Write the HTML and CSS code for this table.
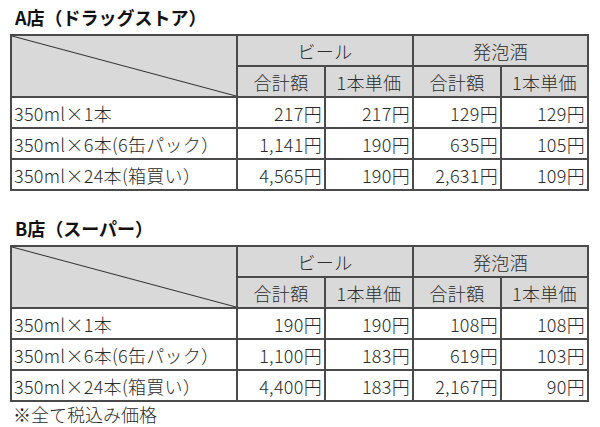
FILE: index.html
```html
<!DOCTYPE html>
<html lang="ja">
<head>
<meta charset="utf-8">
<link rel="stylesheet" href="styles.css">
</head>
<body>
<section class="store">
  <h2 class="title">A店（ドラッグストア）</h2>
  <table class="price">
    <colgroup><col class="c-label"><col class="c-num"><col class="c-num"><col class="c-num"><col class="c-last"></colgroup>
    <thead>
      <tr><th class="diag" rowspan="2"></th><th colspan="2">ビール</th><th colspan="2">発泡酒</th></tr>
      <tr><th>合計額</th><th>1本単価</th><th>合計額</th><th>1本単価</th></tr>
    </thead>
    <tbody>
      <tr><td class="label">350ml×1本</td><td>217円</td><td>217円</td><td>129円</td><td>129円</td></tr>
      <tr><td class="label">350ml×6本(6缶パック）</td><td>1,141円</td><td>190円</td><td>635円</td><td>105円</td></tr>
      <tr><td class="label">350ml×24本(箱買い）</td><td>4,565円</td><td>190円</td><td>2,631円</td><td>109円</td></tr>
    </tbody>
  </table>
</section>
<section class="store store-b">
  <h2 class="title">B店（スーパー）</h2>
  <table class="price">
    <colgroup><col class="c-label"><col class="c-num"><col class="c-num"><col class="c-num"><col class="c-last"></colgroup>
    <thead>
      <tr><th class="diag" rowspan="2"></th><th colspan="2">ビール</th><th colspan="2">発泡酒</th></tr>
      <tr><th>合計額</th><th>1本単価</th><th>合計額</th><th>1本単価</th></tr>
    </thead>
    <tbody>
      <tr><td class="label">350ml×1本</td><td>190円</td><td>190円</td><td>108円</td><td>108円</td></tr>
      <tr><td class="label">350ml×6本(6缶パック）</td><td>1,100円</td><td>183円</td><td>619円</td><td>103円</td></tr>
      <tr><td class="label">350ml×24本(箱買い）</td><td>4,400円</td><td>183円</td><td>2,167円</td><td>90円</td></tr>
    </tbody>
  </table>
  <p class="note">※全て税込み価格</p>
</section>
</body>
</html>
```
FILE: styles.css
```css
html, body {
  margin: 0;
  padding: 0;
  background: #fff;
}
body {
  font-family: "Noto Sans CJK JP", "Noto Sans", sans-serif;
  color: #2b2b2b;
  padding: 0 0 0 10px;
}
.store {
  padding-top: 6px;
}
.store-b {
  padding-top: 26px;
}
.title {
  margin: 0 0 0 5px;
  font-size: 18px;
  font-weight: bold;
  line-height: 22px;
  height: 28px;
  color: #111;
}
.price {
  border-collapse: collapse;
  table-layout: fixed;
  width: 578px;
  border: 2px solid #555;
  font-size: 18px;
  font-weight: 300;
  letter-spacing: 0.3px;
}
.c-label { width: 226px; }
.c-num { width: 88px; }
.c-last { width: 87px; }
.price th, .price td {
  height: 29px;
  padding: 0 2px;
  border: 2px solid #4a4a4a;
  line-height: 20px;
  font-weight: 300;
  white-space: nowrap;
  overflow: hidden;
}
.price th {
  background: #d9d9d9;
  text-align: center;
}
.price td {
  text-align: right;
}
.price td.label {
  text-align: left;
  padding-left: 2px;
}
.price th.diag {
  background: linear-gradient(to top right, #d9d9d9 calc(50% - 1px), #333 50%, #d9d9d9 calc(50% + 1px));
}
.note {
  margin: 0 0 0 3px;
  font-size: 18px;
  font-weight: 300;
  line-height: 24px;
}
```
